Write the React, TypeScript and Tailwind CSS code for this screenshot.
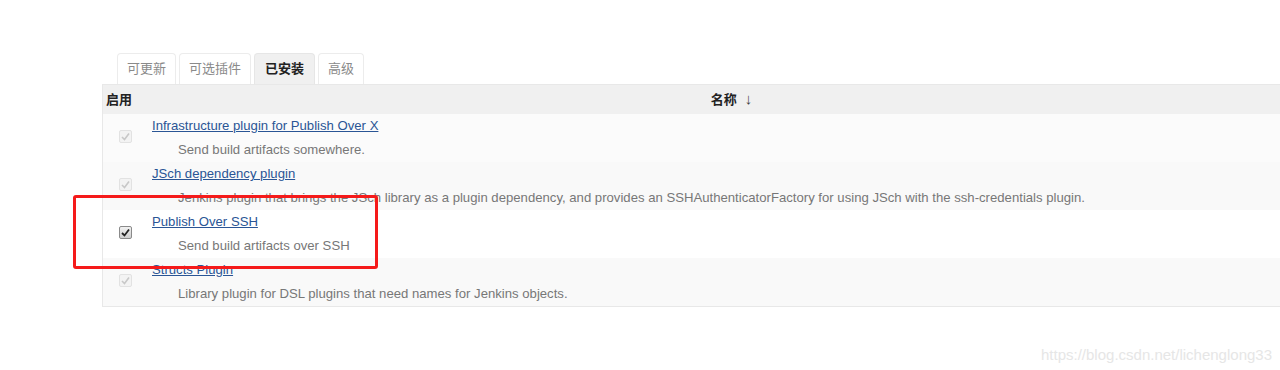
const plugins = [
  {
    name: "Infrastructure plugin for Publish Over X",
    desc: "Send build artifacts somewhere.",
    enabled: false,
    bg: "bg-[#fbfbfb]",
  },
  {
    name: "JSch dependency plugin",
    desc: "Jenkins plugin that brings the JSch library as a plugin dependency, and provides an SSHAuthenticatorFactory for using JSch with the ssh-credentials plugin.",
    enabled: false,
    bg: "bg-[#f9f9f9]",
  },
  {
    name: "Publish Over SSH",
    desc: "Send build artifacts over SSH",
    enabled: true,
    bg: "bg-white",
  },
  {
    name: "Structs Plugin",
    desc: "Library plugin for DSL plugins that need names for Jenkins objects.",
    enabled: false,
    bg: "bg-[#f9f9f9]",
  },
];

const tabs = ["可更新", "可选插件", "已安装", "高级"];

function Check({ enabled }: { enabled: boolean }) {
  if (enabled) {
    return (
      <div className="w-[13px] h-[13px] rounded-[2px] border border-[#8a8a8a] bg-gradient-to-b from-[#f2f2f2] to-[#cfcfcf] flex items-center justify-center">
        <svg width="9" height="9" viewBox="0 0 9 9">
          <path d="M1 5 L3.5 7.5 L8 1.5" stroke="#222" strokeWidth="1.8" fill="none" />
        </svg>
      </div>
    );
  }
  return (
    <div className="w-[13px] h-[13px] rounded-[2px] border border-[#e2e2e2] bg-[#f3f3f3] flex items-center justify-center">
      <svg width="9" height="9" viewBox="0 0 9 9">
        <path d="M1 5 L3.5 7.5 L8 1.5" stroke="#c8c8c8" strokeWidth="1.6" fill="none" />
      </svg>
    </div>
  );
}

export default function App() {
  return (
    <div
      className="relative w-[1280px] h-[370px] bg-white overflow-hidden text-[13px]"
      style={{ fontFamily: '"Liberation Sans", Arial, "Noto Sans CJK SC", sans-serif' }}
    >
      <div className="pt-[53px] pl-[102px]">
        {/* tabs */}
        <div className="flex gap-[3px] pl-[15px]">
          {tabs.map((t, i) => (
            <div
              key={t}
              className={
                i === 2
                  ? "h-[31px] px-[10px] flex items-center rounded-t-[4px] border border-b-0 border-[#e6e6e6] bg-[#f0f0f0] font-bold text-[#222]"
                  : "h-[31px] px-[9px] flex items-center rounded-t-[4px] border border-b-0 border-[#ececec] bg-white text-[#8a8a8a]"
              }
            >
              {t}
            </div>
          ))}
        </div>

        {/* table */}
        <div className="border-l border-b border-t border-[#e8e8e8]">
          <div className="h-[29px] bg-[#f0f0f0] flex items-center font-bold text-[#222]">
            <div className="w-[46px] pl-[3px]">启用</div>
            <div className="flex-1 flex items-center justify-center pl-[34px]">
              名称
              <span className="ml-[8px] font-normal text-[15px] text-[#444]">↓</span>
            </div>
          </div>
          {plugins.map((p) => (
            <div key={p.name} className={`h-[48px] flex ${p.bg}`}>
              <div className="w-[49px] flex justify-center pt-[16px] pr-[4px]">
                <Check enabled={p.enabled} />
              </div>
              <div className="flex-1 flex flex-col text-[13.15px]">
                <div className="h-[24px] flex items-center">
                  <a className="text-[#2a5595] underline cursor-pointer">{p.name}</a>
                </div>
                <div className="h-[24px] flex items-center pl-[26px] text-[#777]">{p.desc}</div>
              </div>
            </div>
          ))}
        </div>
      </div>

      {/* red highlight box */}
      <div className="absolute left-[73px] top-[195px] w-[305px] h-[74px] border-[3px] border-[#f51a1a] rounded-[3px]" />

      {/* watermark */}
      <div className="absolute left-[1041px] top-[344px] text-[15px] text-[#e6e6e6]">
        https://blog.csdn.net/lichenglong33
      </div>
    </div>
  );
}
